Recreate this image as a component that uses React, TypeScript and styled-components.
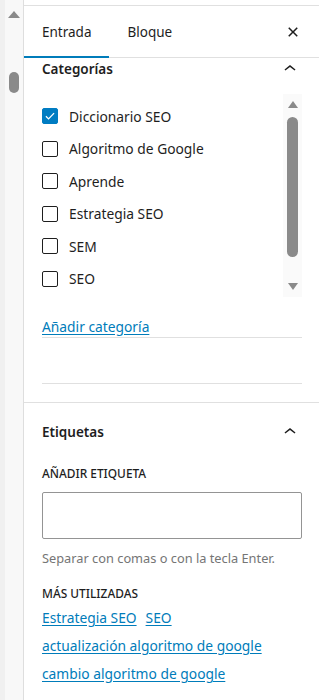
import React from "react";
import styled, { createGlobalStyle } from "styled-components";

const Global = createGlobalStyle`
  html, body { margin: 0; padding: 0; background: #fff; }
  body {
    font-family: "Noto Sans", "Open Sans", sans-serif;
    color: #1e1e1e;
    width: 319px;
    height: 700px;
    overflow: hidden;
  }
  * { box-sizing: border-box; }
`;

const Page = styled.div`
  display: flex;
  height: 700px;
  width: 319px;
`;

const Rail = styled.div`
  width: 24px;
  flex: none;
  background: #f0f0f0;
  border-right: 1px solid #dedede;
  padding-left: 5px;
  display: flex;
`;

const RailTrack = styled.div`
  width: 18px;
  background: #f8f8f8;
  display: flex;
  flex-direction: column;
  align-items: center;
  padding-top: 11px;
`;

const ArrowUp = styled.div<{ $w?: number; $h?: number }>`
  width: 0;
  height: 0;
  border-left: ${(p) => (p.$w ?? 12) / 2}px solid transparent;
  border-right: ${(p) => (p.$w ?? 12) / 2}px solid transparent;
  border-bottom: ${(p) => p.$h ?? 7}px solid #8a8a8a;
`;

const ArrowDown = styled.div<{ $w?: number; $h?: number }>`
  width: 0;
  height: 0;
  border-left: ${(p) => (p.$w ?? 12) / 2}px solid transparent;
  border-right: ${(p) => (p.$w ?? 12) / 2}px solid transparent;
  border-top: ${(p) => p.$h ?? 7}px solid #8a8a8a;
`;

const Thumb = styled.div<{ $w: number; $h: number; $mt: number }>`
  width: ${(p) => p.$w}px;
  height: ${(p) => p.$h}px;
  margin-top: ${(p) => p.$mt}px;
  border-radius: ${(p) => p.$w / 2}px;
  background: #8a8a8a;
`;

const TrackGap = styled.div<{ $h: number }>`
  height: ${(p) => p.$h}px;
  flex: none;
`;

const Panel = styled.div`
  flex: 1;
  min-width: 0;
  padding-top: 5px;
  display: flex;
  flex-direction: column;
`;

const Header = styled.div`
  display: flex;
  align-items: stretch;
  height: 53px;
  border-top: 1px solid #e0e0e0;
  border-bottom: 1px solid #e0e0e0;
`;

const Tab = styled.div<{ $active?: boolean }>`
  display: flex;
  align-items: center;
  padding: 0 18px;
  font-size: 13.5px;
  color: #1e1e1e;
  margin-bottom: -1px;
  box-shadow: ${(p) => (p.$active ? "inset 0 -2px 0 #007cba" : "none")};
`;

const CloseBtn = styled.div`
  margin-left: auto;
  margin-right: 14px;
  display: flex;
  align-items: center;
`;

const Section = styled.section<{ $topBorder?: boolean }>`
  padding: 0 17px 0 18px;
  border-top: ${(p) => (p.$topBorder ? "1px solid #e0e0e0" : "none")};
`;

const SectionHead = styled.div<{ $h: number }>`
  display: flex;
  align-items: center;
  justify-content: space-between;
  height: ${(p) => p.$h}px;
`;

const SectionTitle = styled.h2`
  margin: 0;
  font-size: 13.5px;
  font-weight: 600;
  color: #1e1e1e;
`;

const ListBox = styled.div`
  display: flex;
  height: 203px;
  margin-top: 15px;
`;

const Items = styled.ul`
  flex: 1;
  list-style: none;
  margin: 0;
  padding: 6px 0 0;
`;

const Item = styled.li`
  display: flex;
  align-items: center;
  height: 32.5px;
  gap: 11px;
  font-size: 13.8px;
`;

const Box = styled.span<{ $checked?: boolean }>`
  width: 16px;
  height: 16px;
  border-radius: 2px;
  border: 1px solid ${(p) => (p.$checked ? "#007cc2" : "#1e1e1e")};
  background: ${(p) => (p.$checked ? "#007cc2" : "#fff")};
  display: flex;
  align-items: center;
  justify-content: center;
  flex: none;
`;

const InnerTrack = styled.div`
  width: 19px;
  background: #fafafa;
  display: flex;
  flex-direction: column;
  align-items: center;
  padding-top: 7px;
`;

const Link = styled.a<{ $mr?: number }>`
  color: #007cba;
  text-decoration: underline;
  text-underline-offset: 2px;
  font-size: 13.8px;
  margin-right: ${(p) => p.$mr ?? 0}px;
`;

const AddRow = styled.div`
  padding: 20px 0 1px;
  border-bottom: 1px solid #e0e0e0;
  line-height: 18px;
`;

const Spacer = styled.div`
  height: 46px;
  border-bottom: 1px solid #e0e0e0;
`;

const Gap = styled.div`
  height: 18px;
`;

const Label = styled.div<{ $mt: number }>`
  font-size: 11.9px;
  font-weight: 500;
  text-transform: uppercase;
  margin-top: ${(p) => p.$mt}px;
  color: #1e1e1e;
  line-height: 16px;
`;

const Input = styled.div`
  height: 47px;
  margin-top: 11px;
  border: 1px solid #949494;
  border-radius: 2px;
`;

const Help = styled.p`
  margin: 11px 0 0;
  font-size: 12.8px;
  color: #757575;
  line-height: 16px;
`;

const LinkLine = styled.div<{ $mt: number }>`
  margin-top: ${(p) => p.$mt}px;
  line-height: 18px;
`;

const Chevron = () => (
  <svg width="24" height="24" viewBox="0 0 24 24" fill="#1e1e1e">
    <path d="M6.5 12.4L12 8l5.5 4.4-.9 1.2L12 10l-4.6 3.6-.9-1.2z" />
  </svg>
);

const Close = () => (
  <svg width="24" height="24" viewBox="0 0 24 24" fill="#1e1e1e">
    <path d="M12 13.06l3.712 3.713 1.061-1.06L13.061 12l3.712-3.712-1.06-1.06L12 10.938 8.288 7.227l-1.061 1.06L10.939 12l-3.712 3.712 1.06 1.061L12 13.061z" />
  </svg>
);

const Check = () => (
  <svg width="14" height="14" viewBox="0 0 24 24" fill="none" stroke="#fff" strokeWidth="2.2">
    <path d="M5 12.5l4.5 4.5L19 7" />
  </svg>
);

const categories = [
  { name: "Diccionario SEO", checked: true },
  { name: "Algoritmo de Google" },
  { name: "Aprende" },
  { name: "Estrategia SEO" },
  { name: "SEM" },
  { name: "SEO" },
];

export default function App() {
  return (
    <>
      <Global />
      <Page>
        <Rail>
          <RailTrack>
            <ArrowUp $w={12} $h={7} />
            <Thumb $w={10} $h={21} $mt={54} />
          </RailTrack>
        </Rail>
        <Panel>
          <Header>
            <Tab $active>Entrada</Tab>
            <Tab>Bloque</Tab>
            <CloseBtn>
              <Close />
            </CloseBtn>
          </Header>
          <Section>
            <SectionHead $h={21}>
              <SectionTitle>Categorías</SectionTitle>
              <Chevron />
            </SectionHead>
            <ListBox>
              <Items>
                {categories.map((c) => (
                  <Item key={c.name}>
                    <Box $checked={c.checked}>{c.checked && <Check />}</Box>
                    {c.name}
                  </Item>
                ))}
              </Items>
              <InnerTrack>
                <ArrowUp $w={11} $h={7} />
                <Thumb $w={11} $h={140} $mt={9} />
                <TrackGap $h={26} />
                <ArrowDown $w={11} $h={7} />
              </InnerTrack>
            </ListBox>
            <AddRow>
              <Link>Añadir categoría</Link>
            </AddRow>
            <Spacer />
            <Gap />
          </Section>
          <Section $topBorder>
            <SectionHead $h={58}>
              <SectionTitle>Etiquetas</SectionTitle>
              <Chevron />
            </SectionHead>
            <Label $mt={4}>Añadir etiqueta</Label>
            <Input />
            <Help>Separar con comas o con la tecla Enter.</Help>
            <Label $mt={19}>Más utilizadas</Label>
            <LinkLine $mt={7}>
              <Link $mr={9}>Estrategia SEO</Link>
              <Link>SEO</Link>
            </LinkLine>
            <LinkLine $mt={9}>
              <Link>actualización algoritmo de google</Link>
            </LinkLine>
            <LinkLine $mt={9}>
              <Link>cambio algoritmo de google</Link>
            </LinkLine>
          </Section>
        </Panel>
      </Page>
    </>
  );
}
